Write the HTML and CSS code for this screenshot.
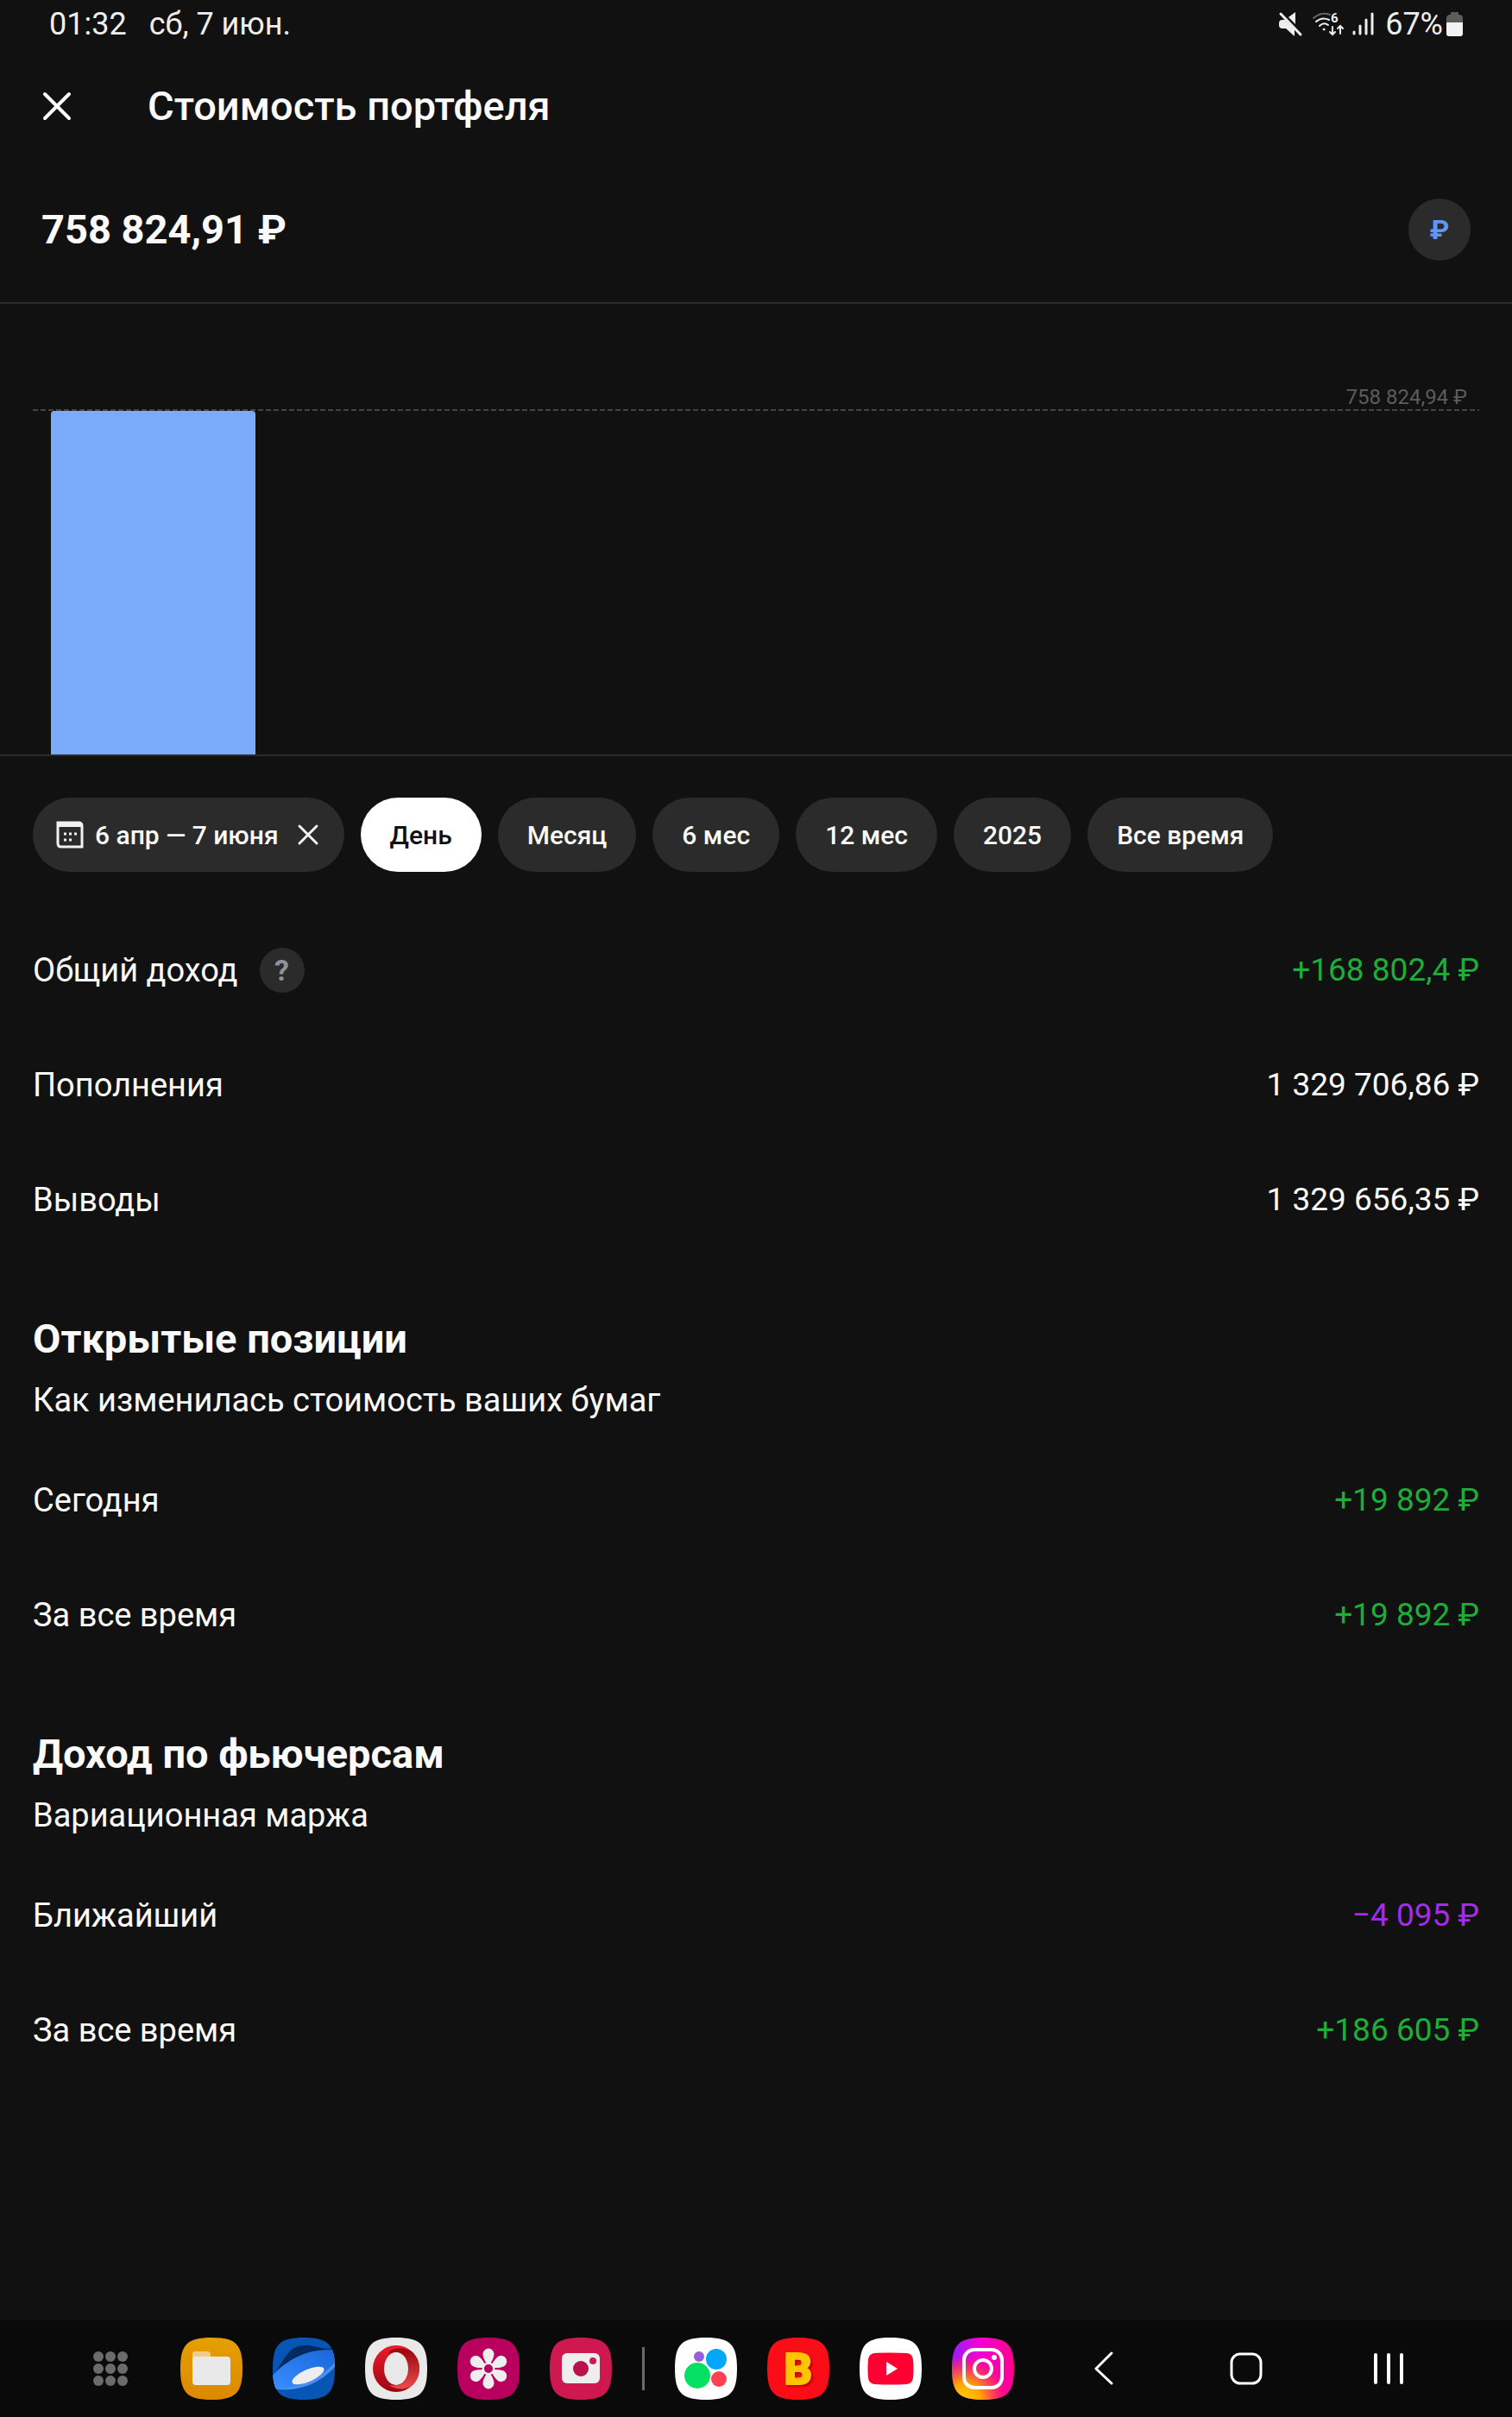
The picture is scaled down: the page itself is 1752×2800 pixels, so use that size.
FILE: index.html
```html
<!DOCTYPE html>
<html lang="ru">
<head>
    <meta charset="UTF-8">
    <meta name="viewport" content="width=device-width, initial-scale=1.0">
    <title>Стоимость портфеля</title>
    <link rel="stylesheet" href="styles.css">
</head>
<body>

<div class="status-bar">
    <div class="status-left">
        <span>01:32</span>
        <span>сб, 7 июн.</span>
    </div>
    <div class="status-right">
        <svg width="28" height="28" viewBox="0 0 28 28">
            <path d="M1 13Q1 9 5 9H8L19 20V28L9 19H5Q1 19 1 15ZM12 6L20 0V14Z" fill="#eee"/>
            <path d="M3 2L26 26" stroke="#eee" stroke-width="3" stroke-linecap="round"/>
        </svg>
        <svg class="wifi" width="38" height="28" viewBox="0 0 38 28" fill="none" stroke="#eee" stroke-width="2" stroke-linecap="round">
            <path d="M2 7Q11 -1 21 3" stroke="#666"/>
            <path d="M5 11Q12 5 20 9M9 16Q14 11 19 15"/>
            <circle cx="14" cy="20" r="1" fill="#eee" stroke-width="1"/>
            <path d="M24 17V26M21 23L24 26L27 23M33 25V16M30 19L33 16L36 19"/>
            <text x="22" y="12" font-size="15" font-weight="700" fill="#eee" stroke="none">6</text>
        </svg>
        <svg class="signal" width="26" height="28" viewBox="0 0 26 28" stroke="#eee" stroke-width="3" stroke-linecap="round">
            <path d="M2 23V25M9 16V25M16 9V25M23 2V25"/>
        </svg>
        <span>67%</span>
        <svg class="battery" width="19" height="30" viewBox="0 0 19 30">
            <path d="M5 4V2Q5 1 6 1H13Q14 1 14 2V4H16Q19 5 19 8V14H0V8Q0 5 3 4Z" fill="#5c5c5c"/>
            <path d="M0 13H19V26Q19 29 16 29H3Q0 29 0 26Z" fill="#f2f2f2"/>
        </svg>
    </div>
</div>

<header class="header">
    <button class="close-btn" aria-label="Закрыть">
        <svg width="36" height="36" viewBox="0 0 36 36" stroke="#fff" stroke-width="4" stroke-linecap="round">
            <path d="M4 4L32 32M32 4L4 32"/>
        </svg>
    </button>
    <h1>Стоимость портфеля</h1>
</header>

<main>
    <div class="balance">
        <span class="amount">758 824,91 ₽</span>
        <button class="currency-btn">₽</button>
    </div>

    <div class="chart">
        <div class="chart-label">758 824,94 ₽</div>
        <svg class="chart-line" width="100%" height="2">
            <line x1="0" y1="1" x2="100%" y2="1" stroke="#444" stroke-width="2" stroke-dasharray="6 3"/>
        </svg>
        <div class="bar"></div>
    </div>

    <div class="periods">
        <button class="chip date">
            <svg width="32" height="32" viewBox="0 0 32 32" fill="none">
                <path d="M2 2H26Q30 2 30 6V30H6Q2 30 2 26Z" stroke="#f2f2f2" stroke-width="3"/>
                <path d="M2 2H26Q30 2 30 7H2Z" fill="#f2f2f2"/>
                <path d="M9 15H12M15 15H18M21 15H24M9 22H12M15 22H18" stroke="#f2f2f2" stroke-width="3"/>
            </svg>
            6 апр — 7 июня
            <svg class="clear" width="24" height="24" viewBox="0 0 24 24" stroke="#f2f2f2" stroke-width="3" stroke-linecap="round">
                <path d="M2 2L22 22M22 2L2 22"/>
            </svg>
        </button>
        <button class="chip active">День</button>
        <button class="chip">Месяц</button>
        <button class="chip">6 мес</button>
        <button class="chip">12 мес</button>
        <button class="chip">2025</button>
        <button class="chip">Все время</button>
    </div>

    <section>
        <div class="row">
            <span>Общий доход</span>
            <button class="help-btn">?</button>
            <span class="value plus">+168 802,4 ₽</span>
        </div>
        <div class="row">
            <span>Пополнения</span>
            <span class="value">1 329 706,86 ₽</span>
        </div>
        <div class="row">
            <span>Выводы</span>
            <span class="value">1 329 656,35 ₽</span>
        </div>
    </section>

    <section>
        <div class="section-head">
            <h2>Открытые позиции</h2>
            <p>Как изменилась стоимость ваших бумаг</p>
        </div>
        <div class="row">
            <span>Сегодня</span>
            <span class="value plus">+19 892 ₽</span>
        </div>
        <div class="row">
            <span>За все время</span>
            <span class="value plus">+19 892 ₽</span>
        </div>
    </section>

    <section>
        <div class="section-head">
            <h2>Доход по фьючерсам</h2>
            <p>Вариационная маржа</p>
        </div>
        <div class="row">
            <span>Ближайший</span>
            <span class="value minus">−4 095 ₽</span>
        </div>
        <div class="row">
            <span>За все время</span>
            <span class="value plus">+186 605 ₽</span>
        </div>
    </section>
</main>

<nav class="taskbar">
    <div class="apps">
        <button class="all-apps" aria-label="Все приложения">
            <svg width="40" height="40" viewBox="0 0 40 40" fill="#6b6b6b">
                <circle cx="6" cy="6" r="6"/><circle cx="20" cy="6" r="6"/><circle cx="34" cy="6" r="6"/>
                <circle cx="6" cy="20" r="6"/><circle cx="20" cy="20" r="6"/><circle cx="34" cy="20" r="6"/>
                <circle cx="6" cy="34" r="6"/><circle cx="20" cy="34" r="6"/><circle cx="34" cy="34" r="6"/>
            </svg>
        </button>
        <button aria-label="Мои файлы">
            <svg width="72" height="72" viewBox="0 0 72 72">
                <defs>
                    <clipPath id="tile"><path d="M36 0C64 0 72 8 72 36S64 72 36 72 0 64 0 36 8 0 36 0Z"/></clipPath>
                    <linearGradient id="files" x2="0" y2="1"><stop stop-color="#e5a000"/><stop offset="1" stop-color="#dc8800"/></linearGradient>
                </defs>
                <rect width="72" height="72" fill="url(#files)" clip-path="url(#tile)"/>
                <path d="M14 28V19Q14 16 17 16H31Q35 16 35 20V24Z" fill="#f0cc88"/>
                <rect x="14" y="22" width="44" height="33" rx="4" fill="#e9e9e9"/>
            </svg>
        </button>
        <button aria-label="Браузер">
            <svg width="72" height="72" viewBox="0 0 72 72">
                <defs><linearGradient id="planet" x1="1" x2="0" y2="1"><stop stop-color="#1767d8"/><stop offset="1" stop-color="#3b8cff"/></linearGradient></defs>
                <g clip-path="url(#tile)">
                    <rect width="72" height="72" fill="#0755b5"/>
                    <path d="M0 46C16 20 20 9 38 9C50 9 50 13 72 13V24L0 52Z" fill="#032b62"/>
                    <path d="M0 44C18 24 44 12 72 15V34C52 56 24 64 0 59Z" fill="#4a90ef"/>
                    <path d="M0 44C18 24 44 12 72 15V29C52 51 24 61 0 58Z" fill="url(#planet)"/>
                    <ellipse cx="41" cy="44" rx="20" ry="7" fill="#eee" transform="rotate(-24 41 44)"/>
                </g>
            </svg>
        </button>
        <button aria-label="Opera">
            <svg width="72" height="72" viewBox="0 0 72 72">
                <defs>
                    <linearGradient id="opera1" x2="0" y2="1"><stop stop-color="#ec1c2a"/><stop offset="1" stop-color="#9c0610"/></linearGradient>
                    <linearGradient id="opera2" x2="0" y2="1"><stop stop-color="#96060d"/><stop offset="1" stop-color="#ee4b4b"/></linearGradient>
                </defs>
                <rect width="72" height="72" fill="#e9e9e9" clip-path="url(#tile)"/>
                <circle cx="36" cy="36" r="27" fill="url(#opera1)"/>
                <path d="M26 19C31 11 44 11 54 16C66 26 66 46 54 56C44 62 33 59 28 55C46 58 50 46 50 36C50 24 44 13 26 19Z" fill="url(#opera2)"/>
                <ellipse cx="36" cy="36" rx="14" ry="19" fill="#e9e9e9"/>
            </svg>
        </button>
        <button aria-label="Галерея">
            <svg width="72" height="72" viewBox="0 0 72 72">
                <defs><path id="petal" d="M36 33C31 25 30 22 30 19A6 6 0 0 1 42 19C42 22 41 25 36 33Z"/></defs>
                <rect width="72" height="72" fill="#b9005f" clip-path="url(#tile)"/>
                <g fill="#eee" stroke="#eee">
                    <use href="#petal"/>
                    <use href="#petal" transform="rotate(60 36 36)"/>
                    <use href="#petal" transform="rotate(120 36 36)"/>
                    <use href="#petal" transform="rotate(180 36 36)"/>
                    <use href="#petal" transform="rotate(240 36 36)"/>
                    <use href="#petal" transform="rotate(300 36 36)"/>
                    <circle cx="36" cy="36" r="7"/>
                </g>
                <circle cx="36" cy="36" r="5" fill="#b9005f"/>
            </svg>
        </button>
        <button aria-label="Камера">
            <svg width="72" height="72" viewBox="0 0 72 72">
                <rect width="72" height="72" fill="#d01850" clip-path="url(#tile)"/>
                <rect x="14" y="18" width="44" height="35" rx="6" fill="#eee"/>
                <circle cx="36" cy="36" r="9" fill="#b9124c"/>
                <circle cx="50" cy="27" r="4" fill="#cc1c55"/>
            </svg>
        </button>
        <span class="divider"></span>
        <button aria-label="Сервисы">
            <svg width="72" height="72" viewBox="0 0 72 72">
                <rect width="72" height="72" fill="#fff" clip-path="url(#tile)"/>
                <circle cx="28" cy="22" r="6" fill="#965edb"/>
                <circle cx="48" cy="25" r="12" fill="#00a6f8"/>
                <circle cx="26" cy="44" r="15" fill="#04e061"/>
                <circle cx="51" cy="48" r="9" fill="#ff4053"/>
            </svg>
        </button>
        <button aria-label="B">
            <svg width="72" height="72" viewBox="0 0 72 72">
                <rect width="72" height="72" fill="#fb0d18" clip-path="url(#tile)"/>
                <text class="b-logo" x="36" y="54" text-anchor="middle" fill="#ffc400" stroke="#ffc400">B</text>
            </svg>
        </button>
        <button aria-label="YouTube">
            <svg width="72" height="72" viewBox="0 0 72 72">
                <rect width="72" height="72" fill="#fff" clip-path="url(#tile)"/>
                <path d="M17 18Q36 17 55 18Q61 19 62 25Q63 36 62 47Q61 53 55 54Q36 55 17 54Q11 53 10 47Q9 36 10 25Q11 19 17 18Z" fill="#ff0033"/>
                <path d="M31 28V44L44 36Z" fill="#fff"/>
            </svg>
        </button>
        <button aria-label="Instagram">
            <svg width="72" height="72" viewBox="0 0 72 72">
                <defs>
                    <linearGradient id="insta1" x2="1" y2="0"><stop stop-color="#8d20ff"/><stop offset="0.4" stop-color="#f004d8"/><stop offset="1" stop-color="#ff0090"/></linearGradient>
                    <radialGradient id="insta2" cx="0.2" cy="1" r="0.75"><stop stop-color="#ffd000"/><stop offset="0.35" stop-color="#ffa800"/><stop offset="0.7" stop-color="#ff3850" stop-opacity="0.8"/><stop offset="1" stop-color="#ff0080" stop-opacity="0"/></radialGradient>
                </defs>
                <g clip-path="url(#tile)">
                    <rect width="72" height="72" fill="url(#insta1)"/>
                    <rect width="72" height="72" fill="url(#insta2)"/>
                </g>
                <rect x="14" y="14" width="44" height="44" rx="12" fill="none" stroke="#fff" stroke-width="4"/>
                <circle cx="36" cy="36" r="10" fill="none" stroke="#fff" stroke-width="4"/>
                <circle cx="49" cy="23" r="3" fill="#fff"/>
            </svg>
        </button>
    </div>
    <div class="nav-buttons">
        <button aria-label="Назад">
            <svg width="40" height="40" viewBox="0 0 40 40" fill="none" stroke="#fff" stroke-width="3" stroke-linecap="round" stroke-linejoin="round">
                <path d="M29 2L11 20L29 37"/>
            </svg>
        </button>
        <button aria-label="Домой">
            <svg width="40" height="40" viewBox="0 0 40 40" fill="none" stroke="#fff" stroke-width="3">
                <rect x="3" y="3" width="34" height="34" rx="10"/>
            </svg>
        </button>
        <button aria-label="Недавние">
            <svg width="40" height="40" viewBox="0 0 40 40" stroke="#fff" stroke-width="4" stroke-linecap="round">
                <path d="M5 4V36M20 4V36M35 4V36"/>
            </svg>
        </button>
    </div>
</nav>

</body>
</html>
```

FILE: styles.css
```css
* {
    margin: 0;
    padding: 0;
    box-sizing: border-box;
    font-family: Roboto, sans-serif;
}

body {
    background-color: #111;
    color: #fafafa;
    min-height: 100vh;
    display: flex;
    flex-direction: column;
    font-size: 38px;
    line-height: 48px;
}

button {
    border: none;
    background: none;
    color: inherit;
    cursor: pointer;
}

svg {
    display: block;
    flex-shrink: 0;
    overflow: visible;
}

/* status bar */
.status-bar {
    display: flex;
    justify-content: space-between;
    align-items: center;
    height: 56px;
    padding: 0 57px;
    color: #eee;
    font-size: 36px;
}

.status-left {
    display: flex;
    gap: 26px;
}

.status-right {
    display: flex;
    align-items: center;
}

.wifi {
    margin-left: 11px;
}

.signal {
    margin: 0 12px 0 9px;
}

.battery {
    margin-left: 4px;
}

/* header */
.header {
    display: flex;
    align-items: center;
    gap: 87px;
    height: 134px;
    padding: 0 48px;
}

.header h1 {
    font-size: 47px;
    font-weight: 500;
}

.balance {
    display: flex;
    justify-content: space-between;
    align-items: center;
    height: 162px;
    padding: 0 48px 8px;
    border-bottom: 2px solid #2b2b2b;
}

.amount {
    font-size: 47px;
    font-weight: 700;
}

.currency-btn {
    width: 72px;
    height: 72px;
    border-radius: 50%;
    background-color: #2b2b2b;
    color: #6197f0;
    font-size: 32px;
    font-weight: 700;
}

/* chart */
.chart {
    padding: 94px 38px 0;
    border-bottom: 2px solid #2b2b2b;
}

.chart-label {
    padding-right: 14px;
    color: #5c5c5c;
    font-size: 24px;
    line-height: 28px;
    text-align: right;
}

.bar {
    width: 237px;
    height: 398px;
    margin-left: 21px;
    border-radius: 4px 4px 0 0;
    background-color: #7aabfa;
}

/* periods */
.periods {
    display: flex;
    flex-wrap: wrap;
    gap: 19px;
    padding: 48px 38px 47px;
}

.chip {
    height: 86px;
    padding: 0 34px;
    border-radius: 43px;
    background-color: #2b2b2b;
    font-size: 30px;
    font-weight: 500;
}

.chip.active {
    background-color: #fff;
    color: #111;
}

.chip.date {
    display: flex;
    align-items: center;
    gap: 13px;
    padding: 0 30px 0 27px;
}

.clear {
    margin-left: 9px;
}

/* rows */
.row {
    display: flex;
    align-items: center;
    height: 133px;
    padding: 0 38px;
}

.value {
    margin-left: auto;
    font-size: 37px;
}

.plus {
    color: #1ead38;
}

.minus {
    color: #a32bea;
}

.help-btn {
    width: 52px;
    height: 52px;
    margin-left: 25px;
    border-radius: 50%;
    background-color: #2b2b2b;
    color: #8f9296;
    font-size: 34px;
    font-weight: 700;
}

.section-head {
    padding: 67px 38px 25px;
}

.section-head h2 {
    margin-bottom: 19px;
    font-size: 47px;
    line-height: 56px;
    font-weight: 700;
}

/* taskbar */
.taskbar {
    display: flex;
    justify-content: space-between;
    align-items: center;
    height: 112px;
    margin-top: auto;
    padding: 0 107px 0 92px;
    background-color: #0a0a0a;
}

.apps {
    display: flex;
    align-items: center;
    gap: 35px;
}

.all-apps {
    display: flex;
    justify-content: center;
    width: 72px;
    margin-right: 10px;
}

.divider {
    width: 3px;
    height: 50px;
    background-color: #6b6b6b;
}

.b-logo {
    font-size: 50px;
    font-weight: 900;
    stroke-width: 2px;
    stroke-linejoin: round;
    filter: drop-shadow(2px 2px 1px #bd0000);
}

.nav-buttons {
    display: flex;
    gap: 93px;
}

.nav-buttons button {
    display: flex;
    justify-content: center;
    width: 72px;
}
```
